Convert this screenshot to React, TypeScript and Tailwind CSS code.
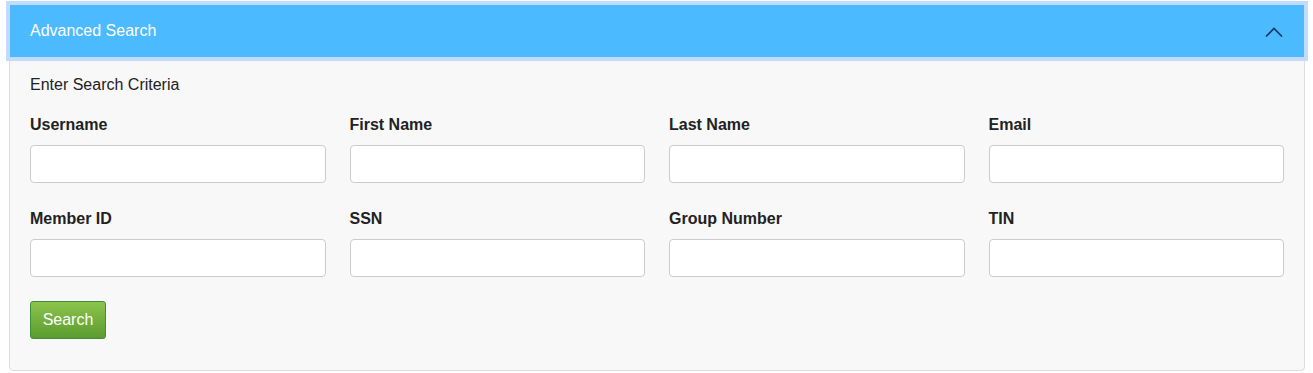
import React from 'react';

const rows = [
  ['Username', 'First Name', 'Last Name', 'Email'],
  ['Member ID', 'SSN', 'Group Number', 'TIN'],
];

export default function App() {
  return (
    <div className="min-h-[373px] bg-white pt-[4px] pl-[9px] font-['Liberation_Sans',Arial,sans-serif] text-[16px] text-[#222]">
      <div className="w-[1296px] rounded-[4px] border border-[#dddddd] bg-[#f8f8f8] pb-[31px]">
        {/* header with focus ring */}
        <div className="flex h-[52px] items-center justify-between bg-[#4bbafe] pl-[20px] pr-[21px] text-white shadow-[0_0_0_4px_#c3dbfd]">
          <span className="leading-[20px]">Advanced Search</span>
          <svg width="18" height="10" viewBox="0 0 18 10" fill="none" className="mt-[2px]">
            <path d="M1 9.5 L9 1.5 L17 9.5" stroke="#17365f" strokeWidth="1.6" />
          </svg>
        </div>

        <div className="px-[20px] pt-[18px]">
          <p className="leading-[20px]">Enter Search Criteria</p>

          {rows.map((row, i) => (
            <div key={i} className={`grid grid-cols-4 gap-x-[24px] ${i === 0 ? 'mt-[20px]' : 'mt-[26px]'}`}>
              {row.map((label) => (
                <div key={label} className="flex flex-col">
                  <label className="font-bold leading-[20px]">{label}</label>
                  <input
                    type="text"
                    className="mt-[10px] h-[38px] w-full rounded-[4px] border border-[#cccccc] bg-white px-3 outline-none"
                  />
                </div>
              ))}
            </div>
          ))}

          <button className="mt-[24px] h-[38px] w-[76px] rounded-[3px] border border-[#3f8c3a] bg-gradient-to-b from-[#8cc44c] to-[#5b9b2f] text-white leading-[20px]">
            Search
          </button>
        </div>
      </div>
    </div>
  );
}
